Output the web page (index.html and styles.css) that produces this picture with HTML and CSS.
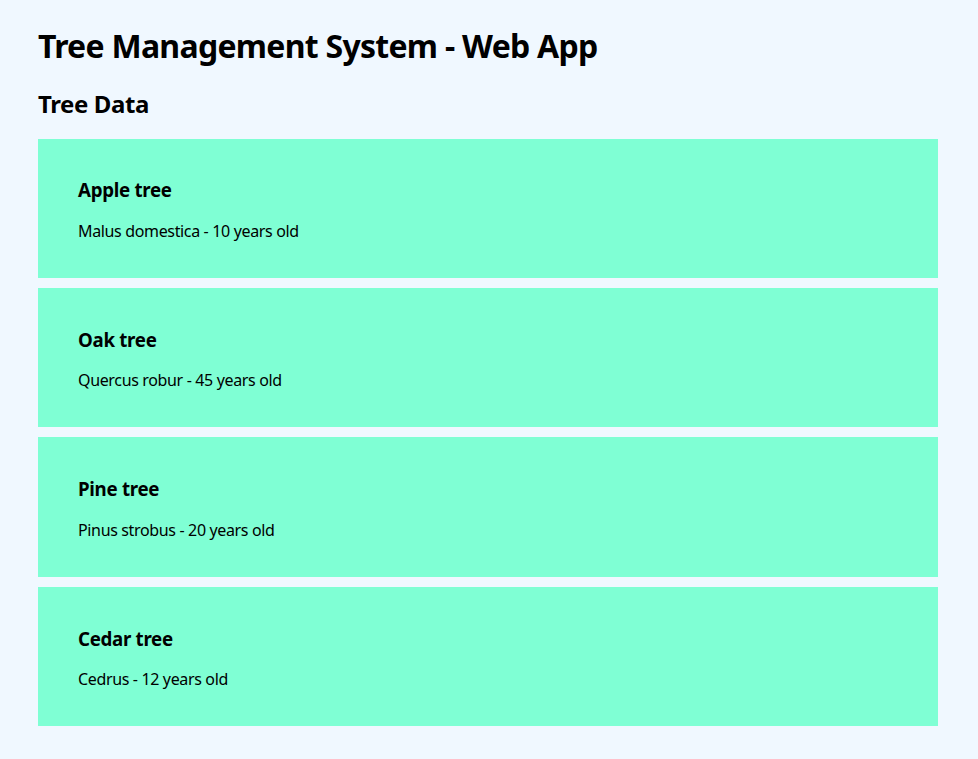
FILE: index.html
```html
<!DOCTYPE html>
<html lang="en">
<head>
<meta charset="utf-8">
<title>Tree Management System - Web App</title>
<link rel="stylesheet" href="styles.css">
</head>
<body>
<div class="app">
  <h1 class="title">Tree Management System - Web App</h1>
  <h2 class="section-title">Tree Data</h2>
  <div class="tree-list">
    <div class="tree-card">
      <h3 class="tree-name">Apple tree</h3>
      <p class="tree-info">Malus domestica - 10 years old</p>
    </div>
    <div class="tree-card">
      <h3 class="tree-name">Oak tree</h3>
      <p class="tree-info">Quercus robur - 45 years old</p>
    </div>
    <div class="tree-card">
      <h3 class="tree-name">Pine tree</h3>
      <p class="tree-info">Pinus strobus - 20 years old</p>
    </div>
    <div class="tree-card">
      <h3 class="tree-name">Cedar tree</h3>
      <p class="tree-info">Cedrus - 12 years old</p>
    </div>
  </div>
</div>
</body>
</html>
```
FILE: styles.css
```css
html, body {
  background: #f0f8ff;
}
body {
  margin: 8px;
  font-family: "Noto Sans", "Open Sans", sans-serif;
  color: #000;
}
.app {
  padding: 0 30px;
}
.title {
  font-size: 32px;
  line-height: 42.5px;
  margin: 16.5px 0 20.5px;
  letter-spacing: -0.72px;
}
.section-title {
  font-size: 24px;
  line-height: 32px;
  margin: 19.92px 0 19px;
  letter-spacing: -0.4px;
}
.tree-card {
  max-width: 820px;
  background: #7fffd4;
  padding: 20px 40px;
  margin-bottom: 10px;
}
.tree-name {
  font-size: 18.72px;
  line-height: 25px;
  margin: 18.72px 0;
  letter-spacing: -0.3px;
}
.tree-info {
  font-size: 16px;
  line-height: 21px;
  margin: 16px 0;
  letter-spacing: -0.35px;
}
```
